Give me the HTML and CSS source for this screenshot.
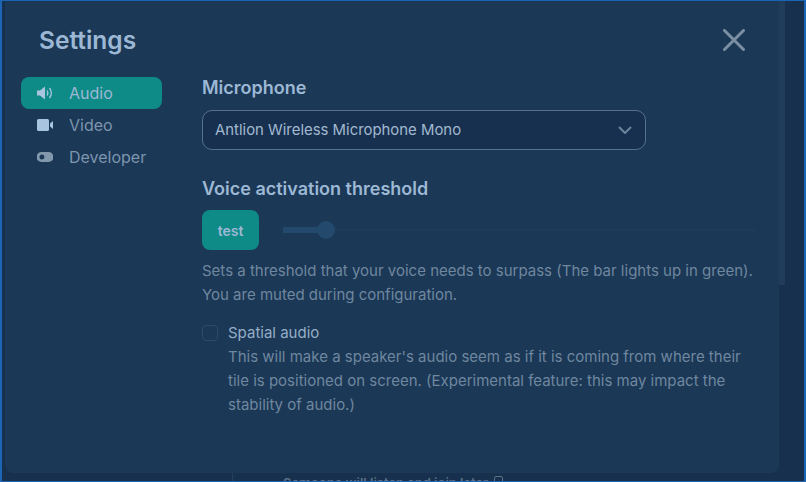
FILE: index.html
```html
<!DOCTYPE html>
<html lang="en">
<head>
<meta charset="UTF-8">
<meta name="viewport" content="width=device-width, initial-scale=1.0">
<title>Settings</title>
<link rel="stylesheet" href="styles.css">
</head>
<body>

<div class="app">
  <div class="behind">
    <div class="behind-text">Someone will listen and join later <span class="behind-box"></span></div>
  </div>

  <div class="modal">
    <div class="scrollbar"></div>

    <div class="modal-head">
      <h1>Settings</h1>
      <button class="close" aria-label="Close">
        <svg width="22" height="22" viewBox="0 0 22 22"><path d="M1.5 1.5L20.5 20.5M20.5 1.5L1.5 20.5"/></svg>
      </button>
    </div>

    <div class="modal-body">
      <nav class="tabs">
        <div class="tab active">
          <svg class="tab-icon" width="16" height="14" viewBox="0 0 16 14"><path class="fill" d="M0 4.500h3L8 .5v13L3 9.500H0z"/><path class="line" d="M10 4.500c1 1.500 1 3.500 0 5M12.500 2c2.200 3 2.200 7 0 10"/></svg>
          <span>Audio</span>
        </div>
        <div class="tab">
          <svg class="tab-icon video" width="16" height="14" viewBox="0 0 16 14"><rect class="fill" x="0" y="1" width="12" height="12" rx="1.500"/><path class="fill" d="M13 5.500L16 3v8l-3-2.500z"/></svg>
          <span>Video</span>
        </div>
        <div class="tab">
          <svg class="tab-icon" width="16" height="14" viewBox="0 0 16 14"><path class="fill" fill-rule="evenodd" d="M4.500 2h7a5 5 0 0 1 0 10h-7a5 5 0 0 1 0-10zM5 4.500a2.500 2.500 0 1 0 0 5a2.500 2.500 0 0 0 0-5z"/></svg>
          <span>Developer</span>
        </div>
      </nav>

      <div class="panel">
        <h2>Microphone</h2>
        <div class="select">
          <span>Antlion Wireless Microphone Mono</span>
          <svg width="14" height="8" viewBox="0 0 14 8"><path d="M1 1l6 6 6-6"/></svg>
        </div>

        <h2 class="threshold-title">Voice activation threshold</h2>
        <div class="threshold">
          <button class="test">test</button>
          <div class="slider">
            <div class="slider-fill"></div>
            <div class="slider-knob"></div>
          </div>
        </div>
        <p class="help">Sets a threshold that your voice needs to surpass (The bar lights up in green).<br>You are muted during configuration.</p>

        <div class="option">
          <div class="checkbox"></div>
          <div class="option-text">
            <div class="option-label">Spatial audio</div>
            <p class="help">This will make a speaker's audio seem as if it is coming from where their tile is positioned on screen. (Experimental feature: this may impact the stability of audio.)</p>
          </div>
        </div>
      </div>
    </div>
  </div>
</div>

</body>
</html>
```

FILE: styles.css
```css
* {
  box-sizing: border-box;
}
html, body {
  margin: 0;
  height: 100%;
}
body {
  font-family: Inter, "Liberation Sans", sans-serif;
  background: #16304d;
}
.app {
  position: relative;
  width: 806px;
  height: 482px;
  overflow: hidden;
  background: #16304d;
  border: 1px solid #1a66b5;
  border-left-width: 2px;
  border-right-width: 2px;
}
.behind {
  position: absolute;
  left: 230px;
  right: 0;
  top: 465px;
  bottom: 0;
  border-left: 1px solid #24405d;
}
.behind-text {
  margin-left: 50px;
  margin-top: 9px;
  font-size: 13px;
  font-weight: 600;
  color: #5c7286;
  white-space: nowrap;
}
.behind-box {
  display: inline-block;
  width: 9px;
  height: 12px;
  margin-left: 2px;
  border: 1px solid #5c7286;
  border-radius: 2px;
}
.modal {
  position: absolute;
  left: 3px;
  top: -8px;
  width: 774px;
  height: 480px;
  background: #1b3856;
  border-radius: 0 0 8px 8px;
}
.scrollbar {
  position: absolute;
  right: -6px;
  top: 0;
  width: 6px;
  height: 292px;
  background: #213d5b;
}
.modal-head {
  display: flex;
  justify-content: space-between;
  align-items: center;
  padding: 24px 34px 0 34px;
  height: 70px;
}
h1 {
  margin: 0;
  font-size: 24.500px;
  line-height: 32px;
  font-weight: 600;
  color: #9db8d5;
}
.close {
  width: 22px;
  height: 22px;
  padding: 0;
  background: none;
  border: 0;
}
.close svg {
  display: block;
  fill: none;
  stroke: #7b8fa3;
  stroke-width: 3;
  stroke-linecap: round;
}
.modal-body {
  display: flex;
  padding-top: 14px;
}
.tabs {
  width: 141px;
  margin-left: 16px;
  flex: none;
}
.tab {
  display: flex;
  align-items: center;
  height: 32px;
  padding-left: 16px;
  font-size: 16px;
  color: #7d95ae;
  border-radius: 8px;
}
.tab.active {
  background: #0e8a87;
  color: #9db8d5;
}
.tab-icon {
  margin-right: 16px;
  flex: none;
}
.tab-icon .fill {
  fill: #8298ad;
}
.tab-icon .line {
  fill: none;
  stroke: #a9c4de;
  stroke-width: 1.300;
}
.tab.active .tab-icon .fill,
.tab-icon.video .fill {
  fill: #a9c4de;
}
.panel {
  width: 554px;
  margin-left: 40px;
}
h2 {
  margin: 0;
  font-size: 18px;
  line-height: 22px;
  font-weight: 600;
  color: #9db8d5;
}
.select {
  display: flex;
  justify-content: space-between;
  align-items: center;
  width: 444px;
  height: 40px;
  margin-top: 11px;
  padding: 0 13px 0 12px;
  font-size: 14.900px;
  color: #a2b9d0;
  background: #17304f;
  border: 1px solid #56708c;
  border-radius: 10px;
}
.select svg {
  fill: none;
  stroke: #6d849c;
  stroke-width: 2;
}
.threshold-title {
  margin-top: 28px;
}
.threshold {
  display: flex;
  align-items: center;
  margin-top: 10px;
}
.test {
  width: 57px;
  height: 40px;
  padding: 0;
  font-family: inherit;
  font-size: 14px;
  font-weight: 600;
  color: #9db8d5;
  background: #0e8a87;
  border: 0;
  border-radius: 8px;
}
.slider {
  display: flex;
  align-items: center;
  flex: 1;
  margin-left: 24px;
  height: 18px;
  background: linear-gradient(#1d3c5b, #1d3c5b) center / 100% 2px no-repeat;
}
.slider-fill {
  width: 35px;
  height: 6px;
  background: #234a6d;
}
.slider-knob {
  width: 18px;
  height: 18px;
  margin-left: -1px;
  background: #234a6d;
  border-radius: 50%;
}
.help {
  margin: 9px 0 0;
  font-size: 15px;
  line-height: 24px;
  color: #6f879f;
}
.option {
  display: flex;
  margin-top: 14px;
}
.checkbox {
  flex: none;
  width: 16px;
  height: 16px;
  margin-top: 4px;
  border: 1px solid #2d4a68;
  border-radius: 4px;
}
.option-text {
  margin-left: 10px;
  width: 520px;
}
.option-label {
  font-size: 15px;
  line-height: 24px;
  color: #95aec8;
}
.option-text .help {
  margin: 0;
}
```
